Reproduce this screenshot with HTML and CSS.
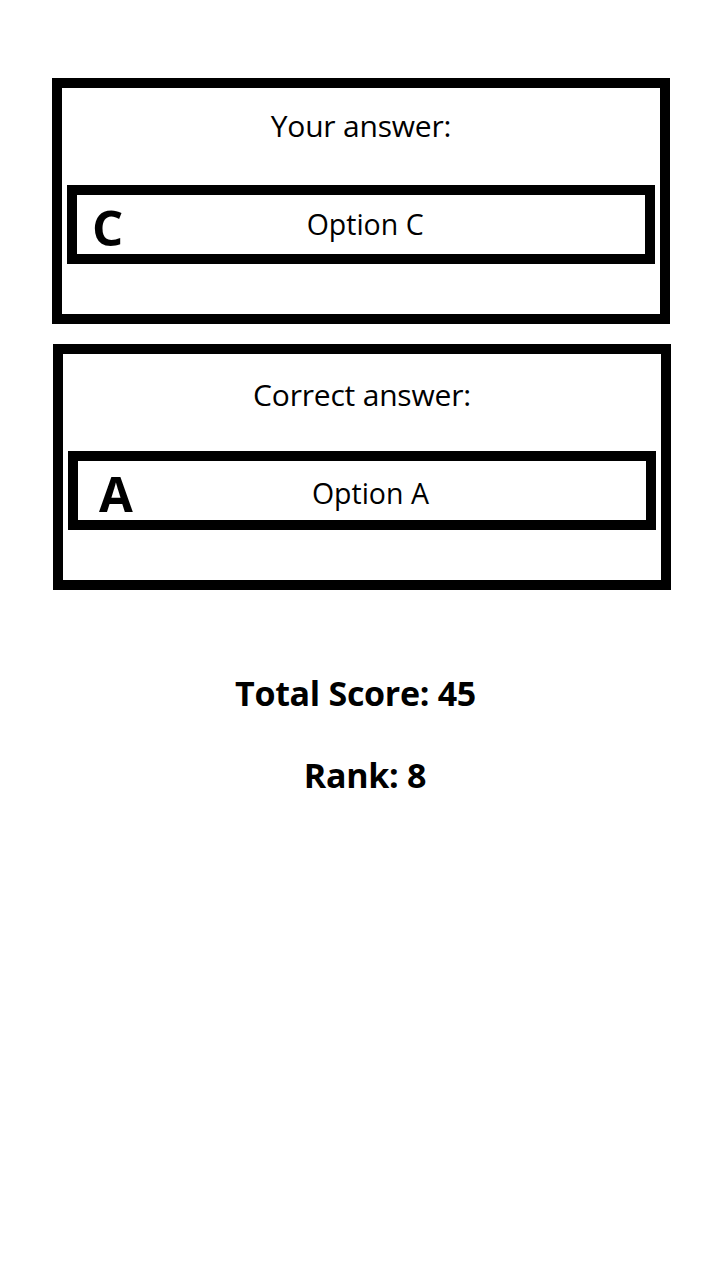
FILE: index.html
```html
<!DOCTYPE html>
<html>
<head>
<meta charset="utf-8">
<link rel="stylesheet" href="styles.css">
</head>
<body>
<main class="page">
  <section class="card">
    <div class="card-title">Your answer:</div>
    <div class="option">
      <span class="letter letter-c">C</span>
      <span class="option-text">Option C</span>
    </div>
  </section>
  <section class="card card-second">
    <div class="card-title card-title-second">Correct answer:</div>
    <div class="option">
      <span class="letter letter-a">A</span>
      <span class="option-text option-text-second">Option A</span>
    </div>
  </section>
  <div class="score">Total Score: 45</div>
  <div class="rank">Rank: 8</div>
</main>
</body>
</html>
```

FILE: styles.css
```css
html, body {
  margin: 0;
  padding: 0;
  background: #ffffff;
}

body {
  font-family: "Open Sans", "Noto Sans", sans-serif;
  color: #000000;
}

.page {
  display: flex;
  flex-direction: column;
  padding-top: 78px;
}

.card {
  box-sizing: border-box;
  width: 618px;
  margin-left: 52px;
  border: 10px solid #000000;
  padding: 0 5px 50px 5px;
}

.card-second {
  margin-top: 20px;
  margin-left: 53px;
}

.card-title {
  height: 97px;
  box-sizing: border-box;
  padding-top: 18px;
  line-height: 40px;
  font-size: 30px;
  text-align: center;
  letter-spacing: -0.2px;
}

.card-title-second {
  padding-top: 21px;
}

.option {
  box-sizing: border-box;
  height: 79px;
  border: 10px solid #000000;
  display: flex;
  align-items: center;
  padding-right: 38px;
}

.letter {
  font-weight: 700;
  font-size: 49px;
  line-height: 59px;
  padding-top: 6px;
}

.letter-c {
  margin-left: 15px;
}

.letter-a {
  margin-left: 21px;
}

.option-text {
  flex: 1;
  text-align: center;
  font-size: 28.5px;
  line-height: 59px;
}

.option-text-second {
  padding-top: 5px;
}

.score,
.rank {
  font-weight: 700;
  font-size: 34px;
  line-height: 48px;
  text-align: center;
  letter-spacing: -0.3px;
}

.score {
  margin-top: 79px;
  padding-right: 9px;
}

.rank {
  margin-top: 34px;
  padding-left: 10px;
}
```
